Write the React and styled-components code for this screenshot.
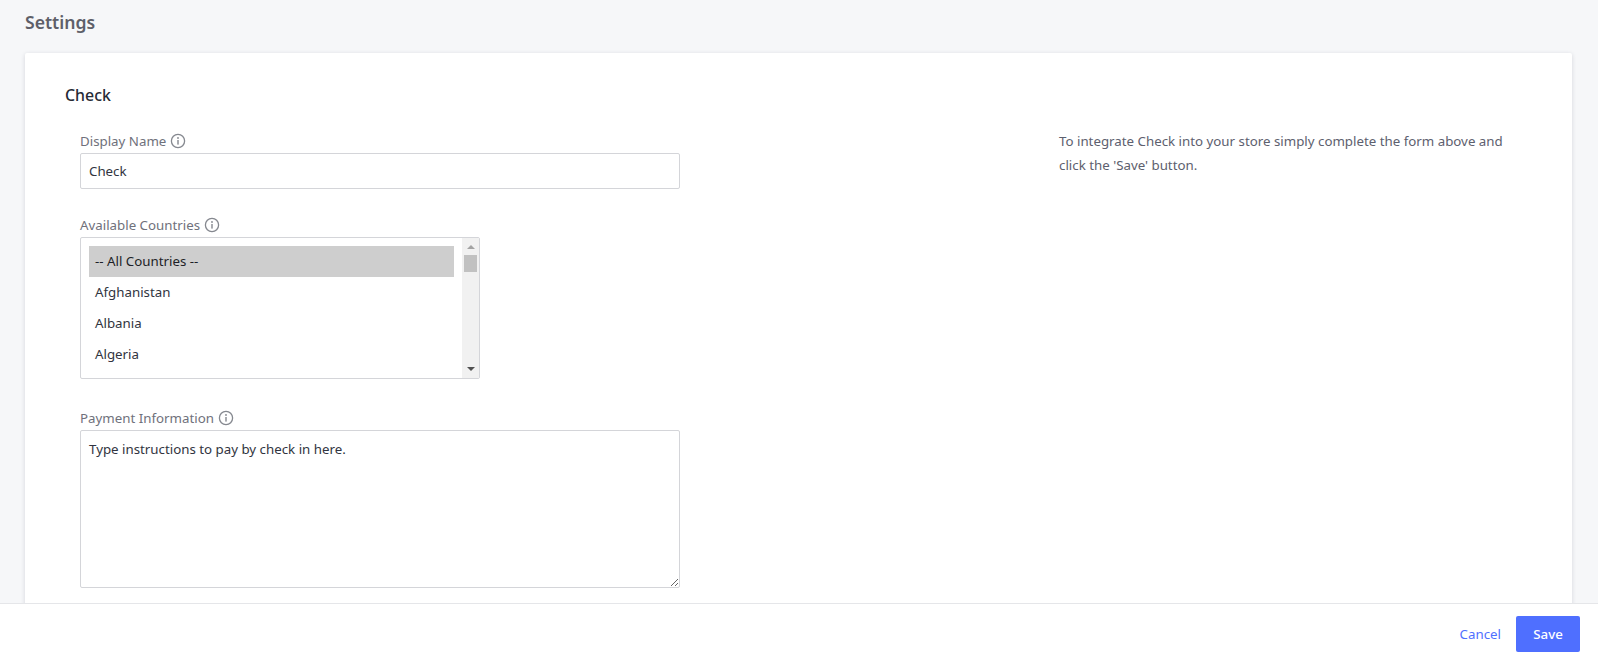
import React from "react";
import styled, { createGlobalStyle } from "styled-components";

const GlobalStyle = createGlobalStyle`
  * { box-sizing: border-box; }
  html, body { margin: 0; height: 100%; }
  body {
    background: #f6f7f9;
    font-family: "Noto Sans", "Open Sans", sans-serif;
    font-size: 13.3px;
    color: #313440;
    overflow: hidden;
  }
`;

const countries = ["-- All Countries --", "Afghanistan", "Albania", "Algeria"];

const InfoIcon = () => (
  <InfoSvg viewBox="0 0 16 16" aria-hidden="true">
    <circle cx="8" cy="8" r="6.6" fill="none" stroke="#85888f" strokeWidth="1.3" />
    <circle cx="8" cy="5" r="0.9" fill="#85888f" />
    <rect x="7.3" y="7" width="1.4" height="4.6" fill="#85888f" />
  </InfoSvg>
);

const Field = ({ label, width, gap, children }) => (
  <FieldGroup $width={width} $gap={gap}>
    <Label>
      {label}
      <InfoIcon />
    </Label>
    {children}
  </FieldGroup>
);

const App = () => (
  <>
    <GlobalStyle />
    <Page>
      <Main>
        <PageTitle>Settings</PageTitle>
        <Card>
          <CardTitle>Check</CardTitle>
          <CardBody>
            <Form>
              <Field label="Display Name" width={600} gap={26}>
                <TextInput defaultValue="Check" />
              </Field>
              <Field label="Available Countries" width={400} gap={29}>
                <ListBox>
                  <ListItems>
                    {countries.map((name, i) => (
                      <ListItem key={name} $selected={i === 0}>
                        {name}
                      </ListItem>
                    ))}
                  </ListItems>
                  <ScrollTrack>
                    <ArrowUp />
                    <ScrollThumb />
                    <ArrowDown />
                  </ScrollTrack>
                </ListBox>
              </Field>
              <Field label="Payment Information" width={600} gap={28}>
                <TextArea defaultValue="Type instructions to pay by check in here." />
              </Field>
            </Form>
            <HelpText>
              To integrate Check into your store simply complete the form above and click the 'Save' button.
            </HelpText>
          </CardBody>
        </Card>
      </Main>
      <Footer>
        <CancelLink href="#">Cancel</CancelLink>
        <SaveButton type="button">Save</SaveButton>
      </Footer>
    </Page>
  </>
);

export default App;

const Page = styled.div`
  display: flex;
  flex-direction: column;
  height: 100vh;
`;

const Main = styled.main`
  flex: 1;
  min-height: 0;
  overflow: hidden;
  padding: 0 26px 0 25px;
`;

const PageTitle = styled.h1`
  margin: 0;
  padding-top: 10px;
  height: 53px;
  font-size: 17.6px;
  line-height: 24px;
  font-weight: 600;
  color: #5e5f69;
`;

const Card = styled.section`
  background: #fff;
  padding: 30px 40px 40px;
  box-shadow: 0 1px 4px rgba(40, 45, 60, 0.16);
  border-radius: 2px;
`;

const CardTitle = styled.h2`
  margin: 0 0 22px;
  font-size: 15.9px;
  line-height: 24px;
  font-weight: 500;
  color: #262a35;
`;

const CardBody = styled.div`
  display: flex;
  align-items: flex-start;
`;

const Form = styled.form`
  width: 994px;
  flex: none;
  padding: 2px 0 0 15px;
`;

const FieldGroup = styled.div`
  width: ${(p) => p.$width}px;
  margin-bottom: ${(p) => p.$gap}px;
`;

const Label = styled.label`
  display: flex;
  align-items: center;
  gap: 4px;
  height: 20px;
  margin-bottom: 2px;
  font-size: 13.3px;
  color: #6f717b;
`;

const InfoSvg = styled.svg`
  width: 16px;
  height: 16px;
  flex: none;
`;

const TextInput = styled.input`
  display: block;
  width: 100%;
  height: 36px;
  padding: 0 8px;
  border: 1px solid #d4d5d9;
  border-radius: 2px;
  background: #fff;
  font: inherit;
  color: #313440;
  outline: none;
`;

const ListBox = styled.div`
  display: flex;
  height: 142px;
  border: 1px solid #d4d5d9;
  border-radius: 2px;
  overflow: hidden;
`;

const ListItems = styled.ul`
  flex: 1;
  list-style: none;
  margin: 0;
  padding: 8px 8px 0;
`;

const ListItem = styled.li`
  height: 31px;
  line-height: 31px;
  padding: 0 6px;
  background: ${(p) => (p.$selected ? "#cecece" : "transparent")};
  color: ${(p) => (p.$selected ? "#1d1f27" : "#313440")};
`;

const ScrollTrack = styled.div`
  position: relative;
  flex: none;
  width: 17px;
  background: #f1f1f1;
`;

const ArrowUp = styled.span`
  position: absolute;
  top: 7px;
  left: 5px;
  border: 4px solid transparent;
  border-top: 0;
  border-bottom: 4px solid #a3a3a3;
`;

const ArrowDown = styled.span`
  position: absolute;
  bottom: 7px;
  left: 5px;
  border: 4px solid transparent;
  border-bottom: 0;
  border-top: 4px solid #505050;
`;

const ScrollThumb = styled.span`
  position: absolute;
  top: 17px;
  left: 2px;
  width: 13px;
  height: 17px;
  background: #c1c1c1;
`;

const TextArea = styled.textarea`
  display: block;
  width: 100%;
  height: 158px;
  padding: 8px;
  border: 1px solid #d4d5d9;
  border-radius: 2px;
  background: #fff;
  font: inherit;
  line-height: 20px;
  color: #313440;
  outline: none;
`;

const HelpText = styled.p`
  margin: 0;
  width: 450px;
  font-size: 13.3px;
  line-height: 24px;
  color: #5d606e;
`;

const Footer = styled.footer`
  flex: none;
  height: 59px;
  display: flex;
  align-items: center;
  justify-content: flex-end;
  gap: 15px;
  padding: 1px 18px 0 0;
  background: #fff;
  border-top: 1px solid #e5e6e9;
`;

const CancelLink = styled.a`
  font-size: 13.3px;
  color: #4f6fff;
  text-decoration: none;
`;

const SaveButton = styled.button`
  width: 64px;
  height: 36px;
  border: 0;
  border-radius: 2px;
  background: #4f6fff;
  color: #fff;
  font: inherit;
  font-weight: 500;
`;
